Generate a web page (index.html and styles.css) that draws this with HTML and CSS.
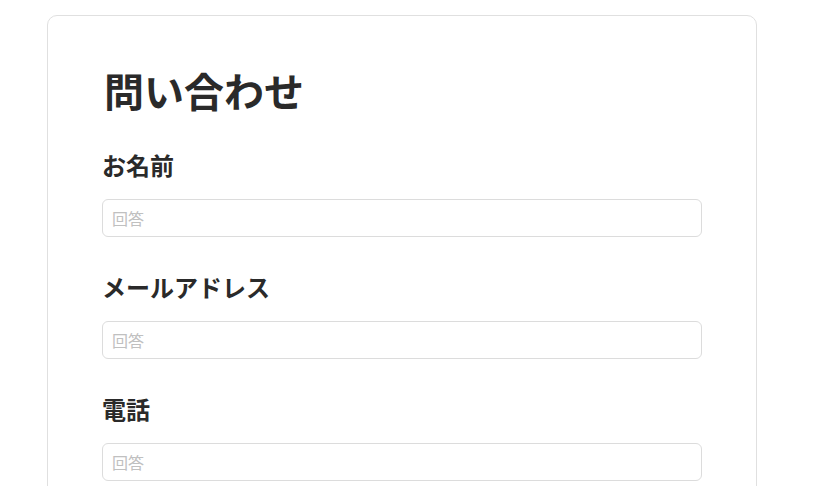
FILE: index.html
```html
<!DOCTYPE html>
<html lang="ja">
<head>
    <meta charset="UTF-8">
    <meta name="viewport" content="width=device-width, initial-scale=1.0">
    <title>問い合わせ</title>
    <link rel="stylesheet" href="styles.css">
</head>
<body>
    <div class="card">
        <h1>問い合わせ</h1>

        <form id="contactForm">
            <div class="form-group">
                <label for="name">お名前</label>
                <input type="text" id="name" placeholder="回答">
            </div>

            <div class="form-group">
                <label for="email">メールアドレス</label>
                <input type="email" id="email" placeholder="回答">
            </div>

            <div class="form-group">
                <label for="tel">電話</label>
                <input type="tel" id="tel" placeholder="回答">
            </div>
        </form>
    </div>
</body>
</html>
```

FILE: styles.css
```css
body { font-family: "Noto Sans CJK JP", "Noto Sans", sans-serif; color: #2a2a2a; margin: 0; padding: 15px 0 0 47px; background: #fff; }
.card { width: 600px; padding: 50px 54px 40px; border: 1px solid #e0e0e0; border-radius: 10px; }
h1 { font-size: 40px; line-height: 48px; margin: 0 0 33px 2px; font-weight: bold; }
.form-group { margin-bottom: 32px; }
label { display: block; font-size: 24px; line-height: 36px; font-weight: bold; margin-bottom: 16px; }
input { display: block; box-sizing: border-box; width: 100%; height: 38px; padding: 0 9px; font-family: inherit; font-size: 16px; border: 1px solid #dcdcdc; border-radius: 6px; outline: none; }
input::placeholder { color: #c0c0c0; }
```
